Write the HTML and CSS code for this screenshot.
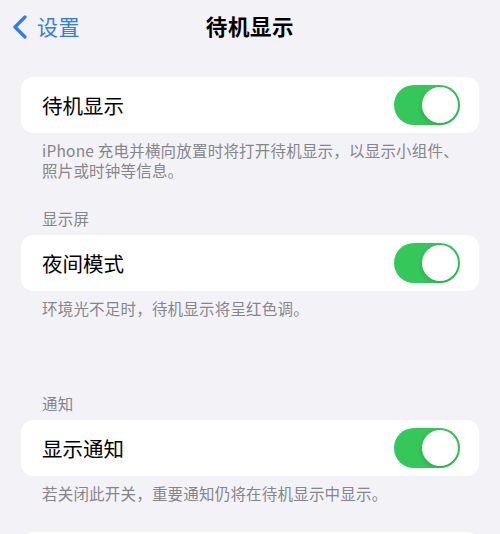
FILE: index.html
```html
<!DOCTYPE html>
<html lang="zh-CN">
<head>
<meta charset="utf-8">
<title>待机显示</title>
<link rel="stylesheet" href="styles.css">
</head>
<body>
<div class="page">
  <header class="nav">
    <a class="back" href="#">
      <svg class="chev" width="16" height="24" viewBox="0 0 16 24" aria-hidden="true">
        <path d="M13 2 L3 12 L13 22" fill="none" stroke="currentColor" stroke-width="3.2" stroke-linecap="round" stroke-linejoin="round"/>
      </svg>
      <span>设置</span>
    </a>
    <h1 class="title">待机显示</h1>
    <span></span>
  </header>

  <section class="group first">
    <div class="cell">
      <span class="label">待机显示</span>
      <span class="toggle on"><span class="knob"></span></span>
    </div>
    <p class="footer">iPhone 充电并横向放置时将打开待机显示，以显示小组件、<br>照片或时钟等信息。</p>
  </section>

  <section class="group second">
    <p class="header">显示屏</p>
    <div class="cell">
      <span class="label">夜间模式</span>
      <span class="toggle on"><span class="knob"></span></span>
    </div>
    <p class="footer">环境光不足时，待机显示将呈红色调。</p>
  </section>

  <section class="group third">
    <p class="header">通知</p>
    <div class="cell">
      <span class="label">显示通知</span>
      <span class="toggle on"><span class="knob"></span></span>
    </div>
    <p class="footer">若关闭此开关，重要通知仍将在待机显示中显示。</p>
  </section>

  <section class="group fourth">
    <div class="cell"></div>
  </section>
</div>
</body>
</html>
```

FILE: styles.css
```css
html, body {
  margin: 0;
  padding: 0;
  background: #f2f2f7;
}

body {
  font-family: "Noto Sans CJK SC", "Noto Sans", sans-serif;
  color: #000;
  overflow: hidden;
}

.page {
  width: 500px;
  height: 534px;
  box-sizing: border-box;
  padding: 0 21px;
  overflow: hidden;
}

/* navigation bar */
.nav {
  display: grid;
  grid-template-columns: 1fr auto 1fr;
  align-items: center;
  height: 52px;
  margin: 0 -21px;
  padding: 0 12px;
}

.back {
  display: flex;
  align-items: center;
  gap: 9px;
  color: #2f7bf5;
  text-decoration: none;
  font-size: 21px;
  line-height: 28px;
  letter-spacing: 0.5px;
}

.chev {
  display: block;
  margin-top: 1px;
}

.title {
  margin: 0;
  font-size: 21.5px;
  font-weight: 700;
  line-height: 28px;
  letter-spacing: 0.6px;
}

/* grouped list */
.group {
  margin: 0;
}

.group.first { margin-top: 25px; }
.group.second { margin-top: 28px; }
.group.third { margin-top: 75px; }
.group.fourth { margin-top: 29px; }

.header {
  margin: 0 0 7px;
  padding: 0 21px;
  font-size: 15.5px;
  line-height: 20px;
  letter-spacing: 0.2px;
  color: #86868a;
}

.cell {
  display: flex;
  align-items: center;
  justify-content: space-between;
  height: 56px;
  padding: 0 19px 0 21px;
  background: #fff;
  border-radius: 12px;
}

.label {
  font-size: 20.5px;
  line-height: 28px;
}

.footer {
  margin: 0;
  padding: 7px 8px 0 21px;
  font-size: 15.5px;
  line-height: 20px;
  letter-spacing: 0.2px;
  color: #86868a;
}

/* switch */
.toggle {
  position: relative;
  display: block;
  width: 66px;
  height: 40px;
  border-radius: 20px;
  background: #e9e9eb;
  flex: none;
}

.toggle.on {
  background: #34c759;
}

.knob {
  position: absolute;
  top: 2px;
  left: 2px;
  width: 36px;
  height: 36px;
  border-radius: 50%;
  background: #fff;
  box-shadow: 0 2px 5px rgba(0, 0, 0, 0.15), 0 0 1px rgba(0, 0, 0, 0.1);
}

.toggle.on .knob {
  left: 28px;
}
```
